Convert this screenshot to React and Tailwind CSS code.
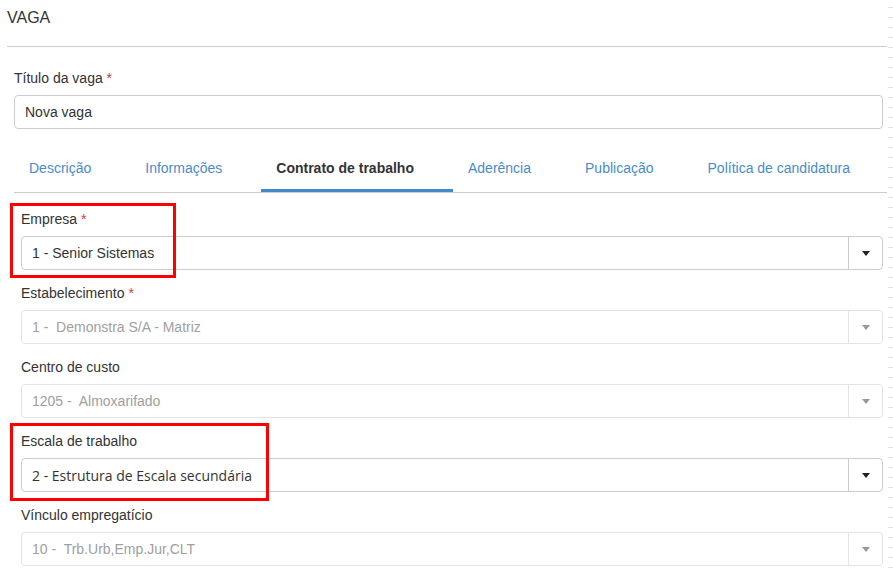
import React from 'react';

const tabs = [
  { label: 'Descrição' },
  { label: 'Informações' },
  { label: 'Contrato de trabalho', active: true },
  { label: 'Aderência' },
  { label: 'Publicação' },
  { label: 'Política de candidatura' },
];

function Caret({ disabled }) {
  return (
    <span
      className={
        'block w-0 h-0 border-l-[4px] border-r-[4px] border-t-[5px] border-l-transparent border-r-transparent ' +
        (disabled ? 'border-t-[#999]' : 'border-t-[#222]')
      }
    />
  );
}

function SelectField({ label, required, value, disabled, valueFont }) {
  return (
    <div>
      <div className="leading-[20px] mb-[7px] text-[14px] text-[#333]">
        {label}
        {required && <span className="text-[#d9363e]"> *</span>}
      </div>
      <div
        className={
          'flex h-[34px] rounded-[4px] border bg-white ' +
          (disabled ? 'border-[#e3e3e3]' : 'border-[#ccc]')
        }
      >
        <div
          className={
            'flex-1 flex items-center pl-[10px] text-[14px] ' +
            (disabled ? 'text-[#a0a0a0]' : 'text-[#333]')
          }
          style={valueFont ? { fontFamily: valueFont } : undefined}
        >
          <span className="whitespace-pre">{value}</span>
        </div>
        <div
          className={
            'w-[34px] flex items-center justify-center border-l ' +
            (disabled ? 'border-[#e3e3e3]' : 'border-[#ccc]')
          }
        >
          <Caret disabled={disabled} />
        </div>
      </div>
    </div>
  );
}

export default function App() {
  return (
    <div
      className="flex min-h-screen bg-white text-[#333]"
      style={{ fontFamily: '"Liberation Sans", Arial, sans-serif' }}
    >
      <div className="flex-1 min-w-0 pl-[7px] pr-[1px]">
        {/* Header */}
        <div className="h-[47px] border-b border-[#ccc] pt-[9px]">
          <div className="text-[16px] leading-[18px]">VAGA</div>
        </div>

        <div className="pl-[7px] pr-[4px]">
          {/* Title */}
          <div className="mt-[21px] leading-[20px] mb-[7px] text-[14px]">
            Título da vaga<span className="text-[#a94442]"> *</span>
          </div>
          <div className="h-[34px] rounded-[4px] border border-[#ccc] flex items-center pl-[10px] text-[14px]">
            Nova vaga
          </div>

          {/* Tabs */}
          <div className="mt-[20px] mr-[-4px] flex border-b border-[#ccc] overflow-hidden">
            {tabs.map((t) => (
              <div
                key={t.label}
                className={
                  'shrink-0 whitespace-nowrap pl-[15px] pr-[39px] pt-[9px] pb-[11px] leading-[20px] text-[14px] border-b-[3px] ' +
                  (t.active
                    ? 'border-[#428bca] font-bold text-[#333]'
                    : 'border-transparent text-[#4a8bcc]')
                }
              >
                {t.label}
              </div>
            ))}
          </div>

          {/* Form */}
          <div className="relative pl-[7px] pt-[16px] flex flex-col gap-[13px]">
            <SelectField label="Empresa" required value="1 - Senior Sistemas" />
            <SelectField
              label="Estabelecimento"
              required
              disabled
              value="1 -  Demonstra S/A - Matriz"
            />
            <SelectField label="Centro de custo" disabled value="1205 -  Almoxarifado" />
            <SelectField
              label="Escala de trabalho"
              value="2 - Estrutura de Escala secundária"
              valueFont='"Open Sans", sans-serif'
            />
            <SelectField
              label="Vínculo empregatício"
              disabled
              value="10 -  Trb.Urb,Emp.Jur,CLT"
            />

            {/* highlight boxes */}
            <div className="absolute left-[-4px] top-[10px] w-[166px] h-[75px] border-[3px] border-[#ff0000] pointer-events-none" />
            <div className="absolute left-[-4px] top-[230px] w-[259px] h-[78px] border-[3px] border-[#ff0000] pointer-events-none" />
          </div>
        </div>
      </div>

      {/* ruler ticks */}
      <div className="w-[5px] shrink-0 bg-[repeating-linear-gradient(to_bottom,transparent_0,transparent_7px,#e2e2e2_7px,#e2e2e2_8px,transparent_8px,transparent_10px)]" />
    </div>
  );
}
